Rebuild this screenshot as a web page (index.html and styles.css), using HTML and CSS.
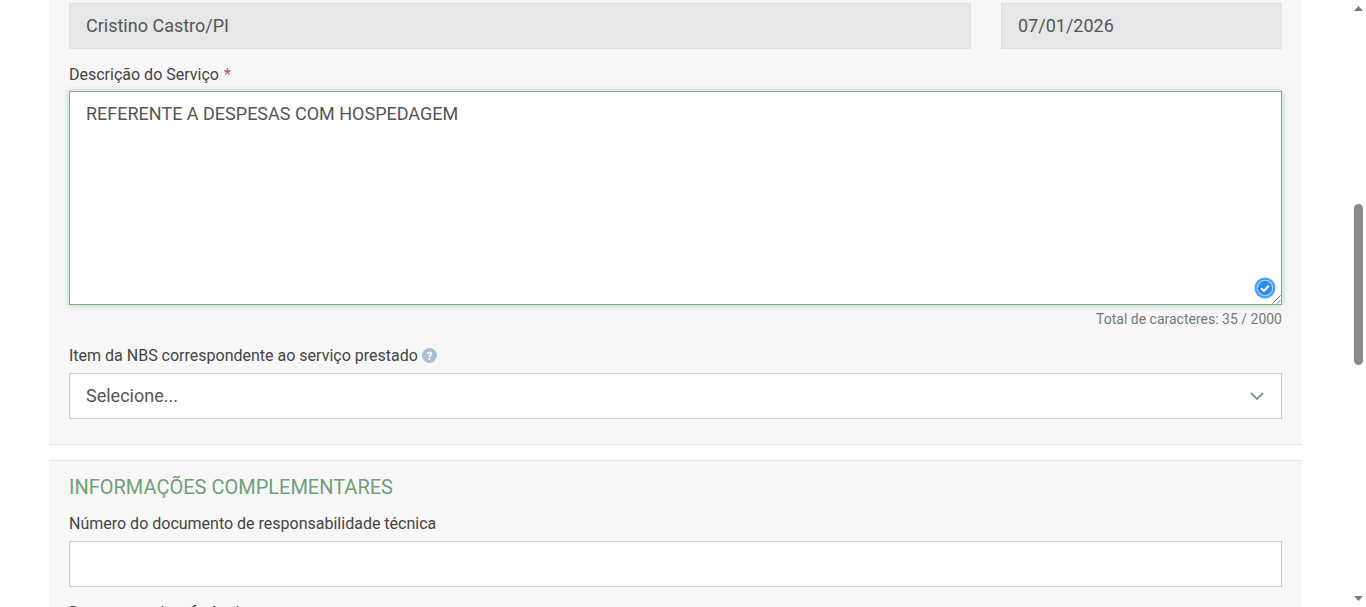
FILE: index.html
```html
<!DOCTYPE html>
<html lang="en">
<head>
    <meta charset="UTF-8">
    <meta name="viewport" content="width=device-width, initial-scale=1.0">
    <title>Descrição do Serviço</title>
    <link rel="stylesheet" href="styles.css">
</head>
<body>

<div class="page">
    <main class="content">
        <section class="panel panel-first">
            <div class="row">
                <div class="field-input field-disabled grow">Cristino Castro/PI</div>
                <div class="field-input field-disabled date">07/01/2026</div>
            </div>

            <label class="field-label label-desc">Descrição do Serviço <span class="required">*</span></label>
            <div class="textarea">
                REFERENTE A DESPESAS COM HOSPEDAGEM
                <svg class="check-badge" viewBox="0 0 22 22" width="22" height="22">
                    <circle cx="11" cy="11" r="10.5" fill="#4a9ff2"/>
                    <circle cx="11" cy="11" r="8.2" fill="#b5d9fa"/>
                    <circle cx="11" cy="11" r="7.2" fill="#2f8ae8"/>
                    <path d="M7 11.2l2.9 2.7 5-5.2" fill="none" stroke="#fff" stroke-width="2"/>
                </svg>
                <svg class="resize-grip" viewBox="0 0 9 9" width="9" height="9">
                    <path d="M0.5 8.5l8-8M5 8.5l3.5-3.5" stroke="#666" stroke-width="1" fill="none"/>
                </svg>
            </div>
            <p class="char-count">Total de caracteres: 35 / 2000</p>

            <label class="field-label label-nbs">
                Item da NBS correspondente ao serviço prestado
                <svg class="help-icon" viewBox="0 0 14 14" width="15" height="15">
                    <circle cx="7" cy="7" r="7" fill="#a9bfd3"/>
                    <path d="M4.6 5.500c0-1.500 1.100-2.300 2.500-2.300s2.400.8 2.400 2.100c0 1.600-1.700 1.600-1.700 3.200H6.100c0-2.200 1.500-2.200 1.500-3.100 0-.4-.2-.7-.6-.7-.5 0-.7.4-.7.800z" fill="#fff"/>
                    <rect x="6.100" y="9.300" width="1.700" height="1.600" fill="#fff"/>
                </svg>
            </label>
            <div class="field-input select">
                Selecione...
                <svg class="chevron" viewBox="0 0 14 8" width="14" height="8">
                    <path d="M1 1l6 6 6-6" fill="none" stroke="#7b9b81" stroke-width="1.800"/>
                </svg>
            </div>
        </section>

        <section class="panel panel-second">
            <h2 class="section-title">INFORMAÇÕES COMPLEMENTARES</h2>
            <label class="field-label">Número do documento de responsabilidade técnica</label>
            <div class="field-input"></div>
            <label class="field-label label-last">Documento de referência</label>
        </section>
    </main>

    <div class="scrollbar">
        <svg class="arrow" viewBox="0 0 9 5" width="9" height="5"><path d="M4.500 0l4.500 5H0z" fill="#7a7a7a"/></svg>
        <div class="scroll-track"><div class="scroll-thumb"></div></div>
        <svg class="arrow" viewBox="0 0 9 5" width="9" height="5"><path d="M0 0h9L4.500 5z" fill="#7a7a7a"/></svg>
    </div>
</div>

</body>
</html>
```

FILE: styles.css
```css
/* Basic styling */
html, body {
    height: 100%;
    margin: 0;
    overflow: hidden;
}

body {
    font-family: Roboto, "Liberation Sans", sans-serif;
    font-size: 16px;
    color: #444;
    background-color: #fff;
}

.page {
    display: flex;
    height: 607px;
    overflow: hidden;
}

.content {
    flex: 1;
    padding: 0 46px 0 49px;
}

.panel {
    background-color: #f7f7f7;
    padding: 0 20px;
}

.panel-first {
    padding-top: 3px;
    padding-bottom: 25px;
    border-bottom: 1px solid #e4e4e4;
    margin-bottom: 15px;
}

.panel-second {
    border-top: 1px solid #e4e4e4;
    padding-top: 14px;
    height: 200px;
}

.row {
    display: flex;
    gap: 30px;
}

.grow {
    flex: 1;
}

.date {
    width: 281px;
    box-sizing: border-box;
}

.field-input {
    box-sizing: border-box;
    height: 46px;
    line-height: 44px;
    padding: 0 16px;
    font-size: 18px;
    color: #555;
    background-color: #fff;
    border: 1px solid #c8c8c8;
}

.field-disabled {
    background-color: #e7e7e7;
    border-color: #e1e1e1;
}

.field-label {
    display: block;
    font-size: 16px;
    line-height: 20px;
    color: #444;
    margin: 15px 0 7px;
}

.label-desc {
    margin: 16px 0 6px;
}

.required {
    margin-left: 1px;
    color: #c0504d;
}

.textarea {
    position: relative;
    box-sizing: border-box;
    height: 214px;
    padding: 11px 16px;
    font-size: 18px;
    line-height: 22px;
    color: #555;
    background-color: #fff;
    border: 1px solid #86ab8c;
    box-shadow: 0 0 6px rgba(110, 170, 120, 0.55);
}

.check-badge {
    position: absolute;
    right: 5px;
    bottom: 5px;
}

.resize-grip {
    position: absolute;
    right: 0;
    bottom: 0;
}

.char-count {
    margin: 6px 0 0;
    text-align: right;
    font-size: 14px;
    line-height: 16px;
    color: #777;
}

.label-nbs {
    margin: 19px 0 7px;
    display: flex;
    align-items: center;
    gap: 4px;
}

.help-icon {
    margin-top: -2px;
}

.select {
    position: relative;
}

.chevron {
    position: absolute;
    right: 17px;
    top: 18px;
}

.section-title {
    margin: 0;
    font-size: 20px;
    font-weight: 400;
    line-height: 24px;
    color: #6f9f78;
}

.panel-second .field-label {
    margin-top: 15px;
}

.panel-second .label-last {
    margin-top: 16px;
}

.scrollbar {
    width: 18px;
    padding: 6px 0 6px 3px;
    box-sizing: border-box;
    display: flex;
    flex-direction: column;
    align-items: center;
    background-color: #fff;
}

.scroll-track {
    flex: 1;
    width: 100%;
    display: flex;
    justify-content: center;
}

.scroll-thumb {
    width: 9px;
    height: 161px;
    margin-top: 193px;
    border-radius: 5px;
    background-color: #8a8a8a;
}
```
